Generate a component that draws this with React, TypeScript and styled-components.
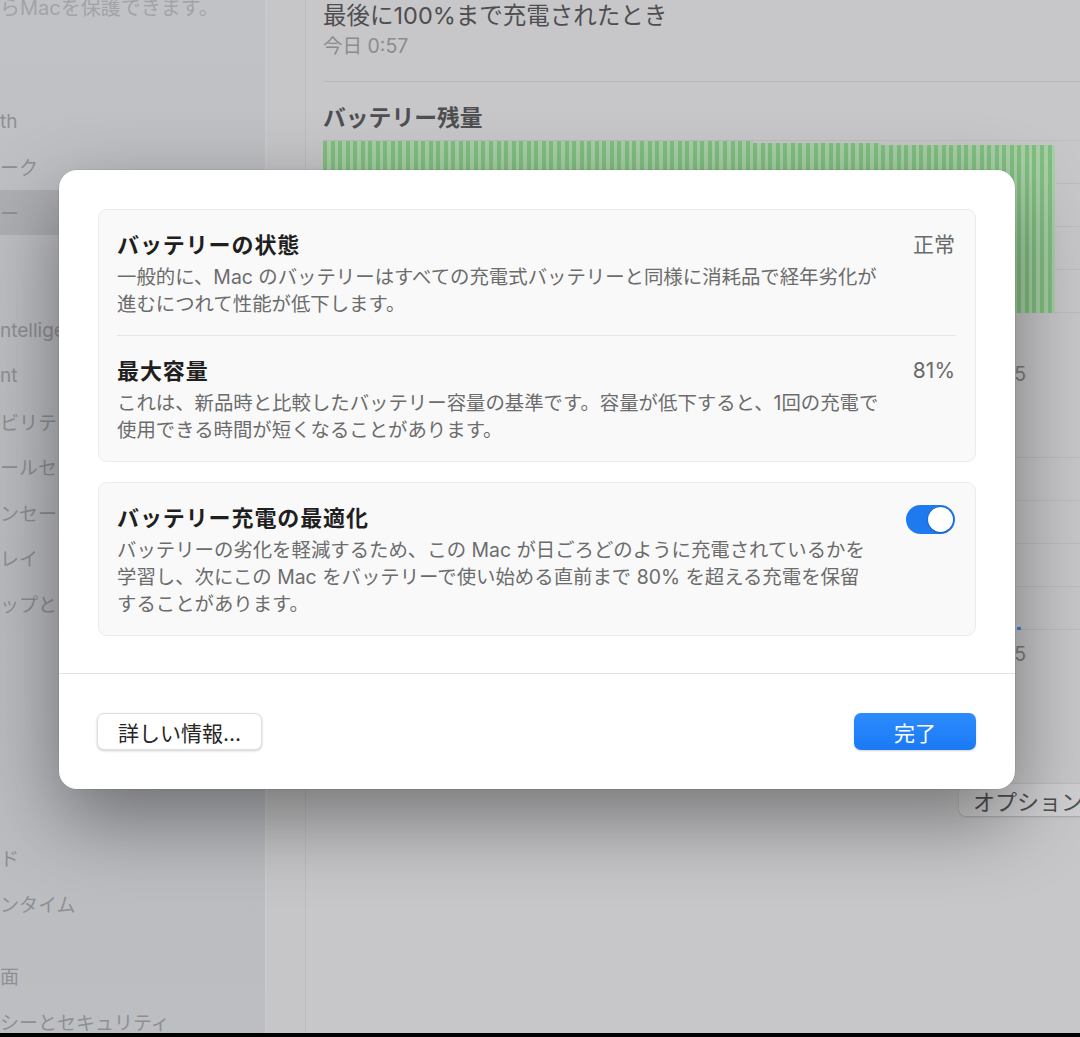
import React from "react";
import styled, { createGlobalStyle } from "styled-components";

const GlobalStyle = createGlobalStyle`
  html, body {
    margin: 0;
    padding: 0;
  }
  body {
    width: 1080px;
    height: 1037px;
    overflow: hidden;
    background: #c6c6c8;
    font-family: Inter, "Noto Sans CJK JP", sans-serif;
  }
`;

const Screen = styled.div`
  position: relative;
  width: 1080px;
  height: 1037px;
  display: flex;
  flex-direction: column;
  overflow: hidden;
`;

const Window = styled.div`
  flex: 1;
  display: flex;
  min-height: 0;
`;

const BottomStrip = styled.div`
  height: 4px;
  background: #000;
`;

/* ---------- sidebar (dimmed behind the sheet) ---------- */

const Sidebar = styled.aside`
  width: 267px;
  flex-shrink: 0;
  border-right: 2px solid #cacacc;
  background: linear-gradient(180deg, #c1c2c6 0%, #babbbf 55%, #bdbec2 100%);
  overflow: hidden;
  padding-right: 10px;
  box-sizing: border-box;
`;

const SideNote = styled.div`
  margin-top: -3px;
  font-size: 20px;
  line-height: 23px;
  color: #a2a3a7;
  white-space: nowrap;
`;

const SideList = styled.div`
  margin-top: 33px;
  display: flex;
  flex-direction: column;
`;

const SideItem = styled.div<{ $selected?: boolean }>`
  height: 45.5px;
  display: flex;
  align-items: center;
  font-size: 19px;
  color: #8e8f93;
  white-space: nowrap;
  border-radius: 0 8px 8px 0;
  background: ${(p) => (p.$selected ? "#aeafb3" : "transparent")};
`;

const SideGap = styled.div`
  height: 27px;
`;

/* ---------- main pane (dimmed) ---------- */

const Main = styled.main`
  flex: 1;
  padding-left: 38px;
  overflow: hidden;
  display: flex;
`;

const Card = styled.section`
  width: 789px;
  flex-shrink: 0;
  padding-left: 17px;
  border-left: 1px solid #bdbdbf;
  background: #c7c7c9;
  display: flex;
  flex-direction: column;
`;

const ChargedTitle = styled.div`
  font-size: 23.5px;
  line-height: 32px;
  color: #4e4e50;
`;

const ChargedTime = styled.div`
  font-size: 19.5px;
  line-height: 28px;
  color: #8b8b8d;
`;

const PaneDivider = styled.div`
  margin-top: 21px;
  height: 1px;
  background: #b9b9bb;
`;

const SectionTitle = styled.div`
  margin-top: 22px;
  font-size: 22.8px;
  font-weight: 700;
  line-height: 28px;
  color: #4f4f51;
`;

const Chart = styled.div<{ $top: number }>`
  margin-top: ${(p) => p.$top}px;
  height: 173px;
  display: flex;
  background: repeating-linear-gradient(
    to bottom,
    #bcbcbe 0 1px,
    transparent 1px 43px
  );
`;

const Bars = styled.div`
  width: 732px;
  height: 100%;
  display: flex;
  align-items: flex-end;
`;

const Bar = styled.div<{ $color: string; $gap: string }>`
  flex: 1;
  background: linear-gradient(
    to right,
    ${(p) => p.$color} 0 55%,
    ${(p) => p.$gap} 55% 100%
  );
`;

const AxisRow = styled.div<{ $top: number }>`
  margin-top: ${(p) => p.$top}px;
  width: 732px;
  display: flex;
  justify-content: flex-end;
  padding-right: 29px;
  box-sizing: border-box;
  font-size: 19.5px;
  line-height: 28px;
  color: #7c7c7f;
`;

const OptionsButton = styled.div`
  margin-top: 116px;
  align-self: flex-end;
  height: 32px;
  padding: 0 10px 0 14px;
  display: flex;
  align-items: center;
  border-radius: 7px;
  background: #cfcfd1;
  box-shadow: 0 0.5px 2px rgba(0, 0, 0, 0.18);
  font-size: 22px;
  color: #4e4e50;
  white-space: nowrap;
`;

/* ---------- the sheet ---------- */

const Dialog = styled.div`
  position: absolute;
  left: 59px;
  top: 170px;
  width: 956px;
  background: #fff;
  border-radius: 18px;
  box-shadow: 0 0 0 0.5px rgba(0, 0, 0, 0.12), 0 30px 80px rgba(0, 0, 0, 0.42);
  display: flex;
  flex-direction: column;
`;

const DialogBody = styled.div`
  padding: 39px 39px 37px;
  display: flex;
  flex-direction: column;
  gap: 20px;
`;

const Group = styled.div`
  background: #f9f9f9;
  border: 1px solid #ebebeb;
  border-radius: 9px;
  padding: 0 19px 0 18px;
`;

const SettingRow = styled.div<{ $divider?: boolean }>`
  display: flex;
  justify-content: space-between;
  align-items: flex-start;
  padding: 20px 0 17px;
  border-top: ${(p) => (p.$divider ? "1px solid #e6e6e6" : "none")};
`;

const TextCol = styled.div`
  display: flex;
  flex-direction: column;
`;

const Title = styled.div`
  font-size: 22px;
  font-weight: 600;
  line-height: 30px;
  letter-spacing: 0.9px;
  color: #1f1f1f;
`;

const Desc = styled.div`
  margin-top: 4px;
  font-size: 19.4px;
  line-height: 27px;
  color: #6c6c6c;
  white-space: nowrap;
`;

const Value = styled.div`
  font-size: 21px;
  line-height: 30px;
  color: #6a6a6a;
  margin-right: 1px;
`;

const Toggle = styled.div<{ $on: boolean }>`
  margin-top: 2px;
  width: 49px;
  height: 29px;
  border-radius: 15px;
  background: ${(p) => (p.$on ? "#1f7af0" : "#e2e2e2")};
  display: flex;
  align-items: center;
  justify-content: ${(p) => (p.$on ? "flex-end" : "flex-start")};
  padding: 0 2px;
  box-sizing: border-box;
  margin-right: 1px;
`;

const Knob = styled.div`
  width: 25px;
  height: 25px;
  border-radius: 50%;
  background: #fff;
  box-shadow: 0 0 0 0.5px rgba(20, 70, 160, 0.5), 0 1px 2px rgba(0, 0, 0, 0.2);
`;

const Footer = styled.div`
  border-top: 1px solid #e3e3e3;
  padding: 39px 39px 39px 38px;
  display: flex;
  justify-content: space-between;
  align-items: center;
`;

const SecondaryButton = styled.button`
  height: 37px;
  width: 165px;
  border-radius: 7px;
  border: 0.5px solid rgba(0, 0, 0, 0.12);
  background: #fff;
  box-shadow: 0 1px 2.5px rgba(0, 0, 0, 0.2);
  font-family: inherit;
  font-size: 21px;
  color: #262626;
  padding: 0;
`;

const PrimaryButton = styled.button`
  height: 37px;
  width: 122px;
  border-radius: 7px;
  border: none;
  background: linear-gradient(180deg, #2e8bff 0%, #1a7af4 100%);
  box-shadow: 0 1px 2px rgba(0, 0, 0, 0.18);
  font-family: inherit;
  font-size: 21px;
  color: #fff;
  padding: 0;
`;

type SideEntry = { label: string; selected?: boolean } | "gap";

const sideEntries: SideEntry[] = [
  { label: "" },
  { label: "th" },
  { label: "ーク" },
  { label: "ー", selected: true },
  { label: "" },
  "gap",
  { label: "ntellige" },
  { label: "nt" },
  { label: "ビリテ" },
  { label: "ールセ" },
  { label: "ンセー" },
  { label: "レイ" },
  { label: "ップと" },
  { label: "" },
  { label: "" },
  { label: "" },
  { label: "" },
  "gap",
  { label: "ド" },
  { label: "ンタイム" },
  "gap",
  { label: "面" },
  { label: "シーとセキュリティ" },
];

const BAR_COUNT = 97;

// battery level, tallest at the left, slight drops towards the right
const levelBars = Array.from({ length: BAR_COUNT }, (_, i) =>
  i < 57 ? 172 : i < 74 ? 170 : 168
);

const usageBars = Array.from({ length: BAR_COUNT }, (_, i) => (i === 92 ? 3 : 0));

const App = () => {
  return (
    <>
      <GlobalStyle />
      <Screen>
        <Window>
          <Sidebar>
            <SideNote>らMacを保護できます。</SideNote>
            <SideList>
              {sideEntries.map((entry, i) =>
                entry === "gap" ? (
                  <SideGap key={i} />
                ) : (
                  <SideItem key={i} $selected={entry.selected}>
                    {entry.label}
                  </SideItem>
                )
              )}
            </SideList>
          </Sidebar>
          <Main>
            <Card>
              <ChargedTitle>最後に100%まで充電されたとき</ChargedTitle>
              <ChargedTime>今日 0:57</ChargedTime>
              <PaneDivider />
              <SectionTitle>バッテリー残量</SectionTitle>
              <Chart $top={8}>
                <Bars>
                  {levelBars.map((h, i) => (
                    <Bar
                      key={i}
                      $color="#80bf80"
                      $gap="#a9cfa8"
                      style={{ height: h }}
                    />
                  ))}
                </Bars>
              </Chart>
              <AxisRow $top={47}>15</AxisRow>
              <Chart $top={69}>
                <Bars>
                  {usageBars.map((h, i) => (
                    <Bar
                      key={i}
                      $color="#3d86e0"
                      $gap="transparent"
                      style={{ height: h }}
                    />
                  ))}
                </Bars>
              </Chart>
              <AxisRow $top={10}>15</AxisRow>
              <OptionsButton>オプション...</OptionsButton>
            </Card>
          </Main>
        </Window>
        <BottomStrip />

        <Dialog>
          <DialogBody>
            <Group>
              <SettingRow>
                <TextCol>
                  <Title>バッテリーの状態</Title>
                  <Desc>
                    一般的に、Mac のバッテリーはすべての充電式バッテリーと同様に消耗品で経年劣化が
                    <br />
                    進むにつれて性能が低下します。
                  </Desc>
                </TextCol>
                <Value>正常</Value>
              </SettingRow>
              <SettingRow $divider>
                <TextCol>
                  <Title>最大容量</Title>
                  <Desc>
                    これは、新品時と比較したバッテリー容量の基準です。容量が低下すると、1回の充電で
                    <br />
                    使用できる時間が短くなることがあります。
                  </Desc>
                </TextCol>
                <Value>81%</Value>
              </SettingRow>
            </Group>
            <Group>
              <SettingRow>
                <TextCol>
                  <Title>バッテリー充電の最適化</Title>
                  <Desc>
                    バッテリーの劣化を軽減するため、この Mac が日ごろどのように充電されているかを
                    <br />
                    学習し、次にこの Mac をバッテリーで使い始める直前まで 80% を超える充電を保留
                    <br />
                    することがあります。
                  </Desc>
                </TextCol>
                <Toggle $on>
                  <Knob />
                </Toggle>
              </SettingRow>
            </Group>
          </DialogBody>
          <Footer>
            <SecondaryButton>詳しい情報...</SecondaryButton>
            <PrimaryButton>完了</PrimaryButton>
          </Footer>
        </Dialog>
      </Screen>
    </>
  );
};

export default App;
